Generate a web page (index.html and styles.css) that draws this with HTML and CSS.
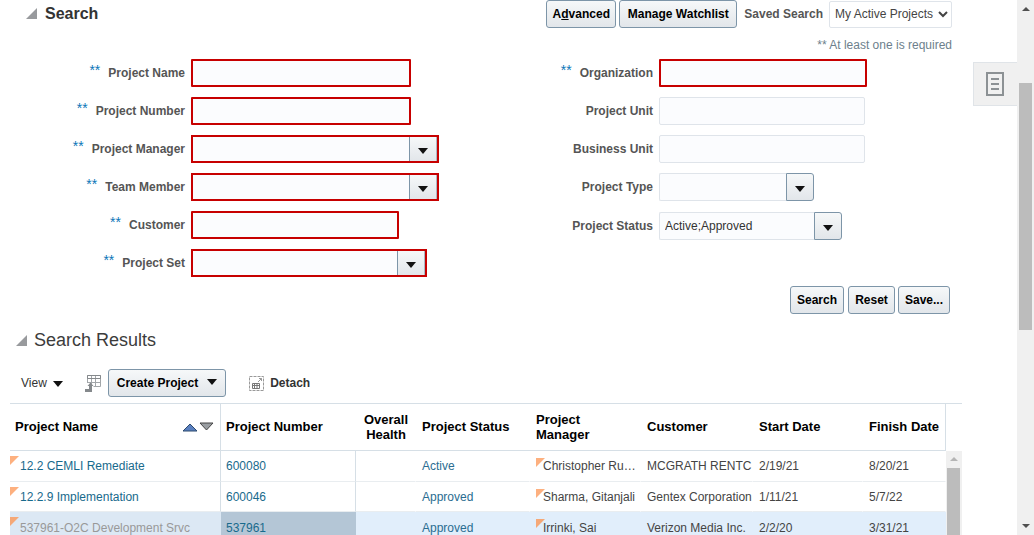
FILE: index.html
```html
<!DOCTYPE html>
<html lang="en">
<head>
    <meta charset="UTF-8">
    <title>Manage Projects</title>
    <link rel="stylesheet" href="styles.css">
</head>
<body>
<div class="page">
    <div class="main">

        <div class="search-head">
            <div class="section-title">
                <span class="disclosure"></span>
                <h2>Search</h2>
            </div>
            <div class="search-tools">
                <button class="btn btn-advanced">A<u>d</u>vanced</button>
                <button class="btn btn-watch">Manage Watchlist</button>
                <span class="saved-label">Saved Search</span>
                <select class="saved-select">
                    <option>My Active Projects</option>
                </select>
            </div>
        </div>
        <div class="required-note">** At least one is required</div>

        <div class="search-form">
            <div class="form-col col-left">
                <div class="form-row">
                    <label><span class="stars">**</span>Project Name</label>
                    <input type="text" class="field field-error w220">
                </div>
                <div class="form-row">
                    <label><span class="stars">**</span>Project Number</label>
                    <input type="text" class="field field-error w220">
                </div>
                <div class="form-row">
                    <label><span class="stars">**</span>Project Manager</label>
                    <div class="combo combo-error w248">
                        <input type="text" class="combo-input">
                        <button class="combo-btn"><span class="arrow"></span></button>
                    </div>
                </div>
                <div class="form-row">
                    <label><span class="stars">**</span>Team Member</label>
                    <div class="combo combo-error w248">
                        <input type="text" class="combo-input">
                        <button class="combo-btn"><span class="arrow"></span></button>
                    </div>
                </div>
                <div class="form-row">
                    <label><span class="stars">**</span>Customer</label>
                    <input type="text" class="field field-error w208">
                </div>
                <div class="form-row">
                    <label><span class="stars">**</span>Project Set</label>
                    <div class="combo combo-error w236">
                        <input type="text" class="combo-input">
                        <button class="combo-btn"><span class="arrow"></span></button>
                    </div>
                </div>
            </div>
            <div class="form-col col-right">
                <div class="form-row">
                    <label><span class="stars">**</span>Organization</label>
                    <input type="text" class="field field-error w208">
                </div>
                <div class="form-row">
                    <label>Project Unit</label>
                    <input type="text" class="field w206">
                </div>
                <div class="form-row">
                    <label>Business Unit</label>
                    <input type="text" class="field w206">
                </div>
                <div class="form-row">
                    <label>Project Type</label>
                    <div class="combo w155">
                        <input type="text" class="combo-input">
                        <button class="combo-btn"><span class="arrow"></span></button>
                    </div>
                </div>
                <div class="form-row row-status">
                    <label>Project Status</label>
                    <div class="combo w183">
                        <input type="text" class="combo-input" value="Active;Approved">
                        <button class="combo-btn"><span class="arrow"></span></button>
                    </div>
                </div>
            </div>
        </div>

        <div class="search-actions">
            <button class="btn btn-search">Search</button>
            <button class="btn btn-reset">Reset</button>
            <button class="btn btn-save">Save...</button>
        </div>

        <div class="section-title results-title">
            <span class="disclosure"></span>
            <h3>Search Results</h3>
        </div>

        <div class="toolbar">
            <span class="view-menu">View <span class="arrow"></span></span>
            <svg class="tool-icon" width="16" height="17" viewBox="0 0 16 17">
                <path d="M2.500 8V0.500h13v11h-7M2.500 3.500h13M2.500 7.500h13M6.500 0.500v11M10.500 0.500v11" fill="none" stroke="#a2a6a9"/>
                <path d="M2.500 0.500h13v3h-13z" fill="none" stroke="#85898c"/>
                <path d="M0 14h4v-3H2.500L5.500 7.500 8.500 11H7v6H0z" fill="#85898c"/>
            </svg>
            <button class="btn btn-create">Create Project <span class="arrow"></span></button>
            <svg class="detach-icon" width="15" height="15" viewBox="0 0 15 15">
                <rect x="0.500" y="0.500" width="14" height="14" fill="none" stroke="#999" stroke-dasharray="3 1"/>
                <path d="M3.500 7.500h7v5h-7zM3.500 9.500h7M5.500 7.500v5M8 7.500v5" fill="none" stroke="#777"/>
                <path d="M9 6l3.500-3.500M10 2.500h2.500V5" fill="none" stroke="#999"/>
            </svg>
            <span class="detach-label">Detach</span>
        </div>

        <div class="table-wrap">
            <table class="results">
                <colgroup>
                    <col class="c-name"><col class="c-number"><col class="c-health"><col class="c-status">
                    <col class="c-manager"><col class="c-customer"><col class="c-start"><col class="c-finish">
                </colgroup>
                <thead>
                    <tr>
                        <th class="th-name">
                            <div class="name-head">
                                <span>Project Name</span>
                                <svg width="32" height="11" viewBox="0 0 32 11">
                                    <path d="M1 10L8 3l7 7z" fill="#5a80c0" stroke="#2d4a6e"/>
                                    <path d="M18 2h13l-6.500 7z" fill="#9a9ea2" stroke="#444"/>
                                </svg>
                            </div>
                        </th>
                        <th class="th-number">Project Number</th>
                        <th class="th-center">Overall<br>Health</th>
                        <th>Project Status</th>
                        <th>Project<br>Manager</th>
                        <th>Customer</th>
                        <th>Start Date</th>
                        <th class="th-last">Finish Date</th>
                    </tr>
                </thead>
                <tbody>
                    <tr>
                        <td class="td-name"><span class="flag"></span><a>12.2 CEMLI Remediate</a></td>
                        <td class="td-number"><a>600080</a></td>
                        <td class="td-health"></td>
                        <td class="td-status">Active</td>
                        <td class="td-manager"><span class="flag"></span>Christopher Ru…</td>
                        <td>MCGRATH RENTC</td>
                        <td>2/19/21</td>
                        <td>8/20/21</td>
                    </tr>
                    <tr class="row-short">
                        <td class="td-name"><span class="flag"></span><a>12.2.9 Implementation</a></td>
                        <td class="td-number"><a>600046</a></td>
                        <td class="td-health"></td>
                        <td class="td-status">Approved</td>
                        <td class="td-manager"><span class="flag"></span>Sharma, Gitanjali</td>
                        <td>Gentex Corporation</td>
                        <td>1/11/21</td>
                        <td>5/7/22</td>
                    </tr>
                    <tr class="selected">
                        <td class="td-name"><span class="flag"></span><a>537961-O2C Development Srvc</a></td>
                        <td class="td-number"><a>537961</a></td>
                        <td class="td-health"></td>
                        <td class="td-status">Approved</td>
                        <td class="td-manager"><span class="flag"></span>Irrinki, Sai</td>
                        <td>Verizon Media Inc.</td>
                        <td>2/2/20</td>
                        <td>3/31/21</td>
                    </tr>
                </tbody>
            </table>
            <div class="table-scroll">
                <span class="scroll-up"></span>
                <span class="table-thumb"></span>
            </div>
        </div>

    </div>

    <div class="side-tab">
        <svg width="18" height="24" viewBox="0 0 18 24">
            <path d="M1 1h16v22H1z" fill="none" stroke="#8c9194" stroke-width="2"/>
            <path d="M5 7h8M5 12h8M5 17h8" stroke="#8c9194" stroke-width="2"/>
        </svg>
    </div>

    <div class="page-scroll">
        <span class="scroll-up"></span>
        <span class="page-thumb"></span>
        <span class="scroll-down"></span>
    </div>
</div>
</body>
</html>
```

FILE: styles.css
```css
html, body {
    margin: 0;
    height: 100%;
    overflow: hidden;
    background: white;
}

body {
    font-family: "Liberation Sans", Arial, sans-serif;
    font-size: 12px;
    color: #333;
}

.page {
    position: relative;
    display: flex;
    height: 535px;
    overflow: hidden;
}

.main {
    width: 1017px;
    flex: none;
}

/* section headers */
.section-title {
    display: flex;
    align-items: center;
}

.disclosure {
    width: 0;
    height: 0;
    border-left: 11px solid transparent;
    border-bottom: 11px solid #989a9d;
    margin-right: 8px;
}

.section-title h2 {
    margin: 0;
    font-size: 16px;
    font-weight: bold;
    color: #333;
}

.section-title h3 {
    margin: 0;
    font-size: 18px;
    font-weight: normal;
    color: #3c3c3c;
}

.search-head {
    display: flex;
    justify-content: space-between;
    align-items: flex-start;
    height: 28px;
    padding: 0 65px 0 26px;
}

.search-head .section-title {
    height: 27px;
}

.search-tools {
    display: flex;
    align-items: center;
}

.btn {
    height: 28px;
    box-sizing: border-box;
    padding: 0;
    font-family: inherit;
    font-size: 12px;
    font-weight: bold;
    color: black;
    border: 1px solid #7d95a8;
    border-radius: 3px;
    background: linear-gradient(#f6f8f9, #e2e6ea);
}

.btn-advanced { width: 70px; }

.btn-watch {
    width: 118px;
    margin-left: 3px;
}

.saved-label {
    margin: 0 6px 0 7px;
    font-weight: bold;
    color: #555;
}

.saved-select {
    width: 123px;
    height: 27px;
    padding-left: 1px;
    font-family: inherit;
    font-size: 12px;
    color: #444;
    background: white;
    border: 1px solid #dfe4ea;
    border-radius: 2px;
}

.required-note {
    height: 31px;
    padding: 10px 65px 0 0;
    box-sizing: border-box;
    text-align: right;
    color: #6d7f8c;
}

/* search form */
.search-form {
    display: flex;
    height: 227px;
}

.col-left {
    width: 540px;
    --label-w: 185px;
}

.col-right {
    --label-w: 113px;
}

.form-row {
    display: flex;
    height: 38px;
}

.form-row label {
    width: var(--label-w);
    height: 28px;
    line-height: 28px;
    margin-right: 6px;
    text-align: right;
    font-weight: bold;
    color: #555;
    white-space: nowrap;
}

.row-status {
    margin-top: 1px;
}

.stars {
    margin-right: 8px;
    font-weight: normal;
    font-size: 14px;
    line-height: 0;
    color: #0b76b8;
    vertical-align: 2px;
}

.field {
    height: 28px;
    box-sizing: border-box;
    padding: 0 5px;
    border: 1px solid #dfe4ea;
    border-radius: 2px;
    background: #fbfcfe;
    outline: none;
}

.field-error {
    border: 2px solid #c70000;
    border-radius: 1px;
}

.w220 { width: 220px; }
.w248 { width: 248px; }
.w236 { width: 236px; }
.w208 { width: 208px; }
.w206 { width: 206px; }
.w155 { width: 155px; }
.w183 { width: 183px; }

.combo {
    display: flex;
    height: 28px;
    box-sizing: border-box;
}

.combo-input {
    flex: 1;
    min-width: 0;
    box-sizing: border-box;
    padding: 0 5px;
    font-family: inherit;
    font-size: 12px;
    color: #333;
    border: 1px solid #dfe4ea;
    border-right: 0;
    border-radius: 2px 0 0 2px;
    background: #fbfcfe;
    outline: none;
}

.combo-btn {
    width: 28px;
    flex: none;
    padding: 0 1px 0 0;
    border: 1px solid #7d95a8;
    border-radius: 0 3px 3px 0;
    background: linear-gradient(#f6f8f9, #e2e6ea);
}

.combo-error {
    border: 2px solid #c70000;
}

.combo-error .combo-input {
    border: 0;
}

.combo-error .combo-btn {
    border: 0;
    border-left: 1px solid #7d95a8;
    border-right: 1px solid #a9b8c4;
    border-radius: 0;
}

.arrow {
    display: inline-block;
    width: 0;
    height: 0;
    border-left: 5px solid transparent;
    border-right: 5px solid transparent;
    border-top: 6px solid #111;
}

.search-actions {
    display: flex;
    justify-content: flex-end;
    padding-right: 67px;
}

.btn-search { width: 54px; }

.btn-reset {
    width: 47px;
    margin-left: 4px;
}

.btn-save {
    width: 52px;
    margin-left: 3px;
}

/* results */
.results-title {
    height: 22px;
    margin-top: 15px;
    padding-left: 16px;
}

.results-title .disclosure {
    margin-right: 7px;
}

.toolbar {
    display: flex;
    align-items: center;
    height: 28px;
    margin-top: 18px;
    padding-left: 21px;
}

.view-menu {
    color: #333;
}

.view-menu .arrow {
    margin-left: 3px;
}

.tool-icon {
    margin-left: 22px;
}

.btn-create {
    width: 118px;
    margin-left: 7px;
}

.btn-create .arrow {
    margin-left: 6px;
    vertical-align: 2px;
}

.detach-icon {
    margin-left: 23px;
}

.detach-label {
    margin-left: 6px;
    font-weight: bold;
    color: #333;
}

.table-wrap {
    display: flex;
    width: 952px;
    margin: 6px 0 0 10px;
    border-top: 1px solid #d6dfe6;
}

.results {
    width: 936px;
    flex: none;
    table-layout: fixed;
    border-collapse: separate;
    border-spacing: 0;
}

.c-name { width: 211px; }
.c-number { width: 135px; }
.c-health { width: 60px; }
.c-status { width: 114px; }
.c-manager { width: 111px; }
.c-customer { width: 112px; }
.c-start { width: 110px; }
.c-finish { width: 83px; }

.results th {
    height: 47px;
    padding: 0 6px 1px;
    box-sizing: border-box;
    text-align: left;
    font-size: 13px;
    line-height: 15px;
    font-weight: bold;
    color: black;
    white-space: nowrap;
    border-bottom: 1px solid #d6dfe6;
}

.results .th-name {
    padding-left: 5px;
    border-right: 1px solid #d6dfe6;
}

.results .th-number {
    padding-left: 5px;
}

.results .th-center {
    text-align: center;
    padding: 0 0 1px;
}

.results .th-last {
    border-right: 1px solid #d6dfe6;
}

.name-head {
    display: flex;
    justify-content: space-between;
    align-items: center;
}

.results td {
    position: relative;
    height: 31px;
    padding: 0 6px;
    box-sizing: border-box;
    white-space: nowrap;
    overflow: hidden;
    color: #444;
    border-bottom: 1px solid #e9edf0;
    border-right: 1px solid white;
}

.results .row-short td {
    height: 30px;
}

.results a {
    color: #186a8c;
}

.results .td-name {
    padding-left: 10px;
    border-right: 1px solid #d6dfe6;
}

.results .td-number {
    padding-left: 5px;
    border-right: 1px solid #d6dfe6;
}

.results .td-status {
    color: #2a6d91;
}

.results .td-manager {
    padding-left: 13px;
}

.flag {
    position: absolute;
    left: 0;
    top: 5px;
    width: 0;
    height: 0;
    border-top: 9px solid #fdb07f;
    border-right: 9px solid transparent;
}

.td-manager .flag {
    left: 6px;
    top: 7px;
}

.selected td {
    background: #e1eefb;
    border-bottom: 0;
    border-right-color: #e1eefb;
}

.selected .td-name {
    background: #dce8f4;
    border-right-color: #dce8f4;
}

.selected .td-name a {
    color: #999;
}

.selected .td-number {
    background: #b4c6d6;
    border-right-color: #b4c6d6;
}

.selected .flag {
    border-top-color: #f5a877;
}

.table-scroll {
    position: relative;
    flex: 1;
    margin-top: 47px;
    background: #f0f0f0;
}

.scroll-up {
    display: block;
    width: 0;
    height: 0;
    margin: 7px auto 0;
    border-left: 4px solid transparent;
    border-right: 4px solid transparent;
    border-bottom: 4px solid #505050;
}

.table-scroll .scroll-up {
    margin-top: 6px;
    border-bottom-color: #b5b5b5;
}

.table-thumb {
    display: block;
    height: 70px;
    margin: 7px 2px 0 1px;
    background: #bcbcbc;
}

.side-tab {
    position: absolute;
    left: 973px;
    top: 62px;
    width: 44px;
    height: 44px;
    box-sizing: border-box;
    padding-right: 2px;
    display: flex;
    align-items: center;
    justify-content: center;
    background: #f0f0f0;
    border: 1px solid #e0e4e8;
    border-right: 0;
}

.page-scroll {
    flex: 1;
    position: relative;
    background: #f0f0f0;
}

.page-thumb {
    display: block;
    height: 247px;
    margin: 72px 2px 0;
    background: #bcbcbc;
}

.scroll-down {
    position: absolute;
    left: 5px;
    bottom: 7px;
    width: 0;
    height: 0;
    border-left: 4px solid transparent;
    border-right: 4px solid transparent;
    border-top: 4px solid #505050;
}
```
